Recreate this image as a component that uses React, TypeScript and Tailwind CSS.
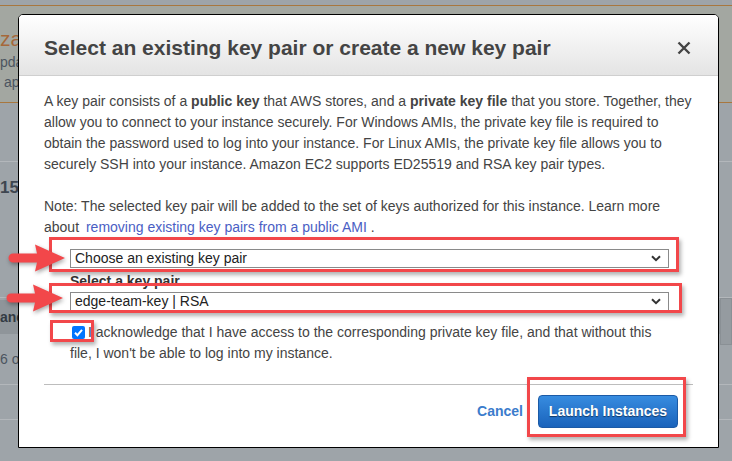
import type { ReactNode } from 'react'

function Chevron() {
  return (
    <svg width="10" height="7" viewBox="0 0 10 7" className="shrink-0">
      <path d="M1 1.2 L5 5.2 L9 1.2" fill="none" stroke="#333" strokeWidth="2" />
    </svg>
  )
}

function Seletor({ children }: { children: ReactNode }) {
  return (
    <div className="ml-[26px] w-[599px] h-[19px] border border-[#8a8a8a] bg-white flex items-center justify-between pl-[4px] pr-[7px] text-[14px] leading-[17px] text-[#222]">
      <span>{children}</span>
      <Chevron />
    </div>
  )
}

function Seta({ className }: { className: string }) {
  return (
    <svg
      className={`absolute drop-shadow-[1px_2px_2px_rgba(0,0,0,0.35)] ${className}`}
      width="58"
      height="30"
      viewBox="0 0 58 30"
    >
      <path
        d="M5 10.5 H29 L27 1.5 L57 15 L27 28.5 L29 19.5 H5 A4.5 4.5 0 0 1 5 10.5 Z"
        fill="#f2474a"
      />
    </svg>
  )
}

const caixa = 'absolute border-[3px] border-[#f2474a] shadow-[2px_3px_4px_rgba(0,0,0,0.3)]'

export default function App() {
  return (
    <div className="relative w-[732px] h-[461px] overflow-hidden bg-[#9ea4a9] font-['Liberation_Sans',Arial,sans-serif]">
      {/* fundo da página, atrás do modal */}
      <div className="h-[5px]" />
      <div className="h-[98px] border-y border-[#a8773f] bg-[#a3a7a1] pt-[20px] pl-0">
        <div className="text-[21px] leading-[26px] text-[#a6683a]">zar</div>
        <div className="text-[14px] leading-[20px] text-[#4c5560]">pda</div>
        <div className="text-[14px] leading-[20px] text-[#4c5560] pl-[4px]">ap</div>
      </div>
      <div className="h-[58px]" />
      <div className="h-[136px] border-t border-[#b3b7bb]">
        <div className="pt-[13px] text-[17px] font-bold text-[#3e4650]">15</div>
      </div>
      <div className="border-t border-[#b3b7bb] h-[3px]" />
      <div className="h-[34px] bg-[#8f959a] flex items-center text-[14px] font-bold text-[#333b44]">
        anc
      </div>
      <div className="h-[50px] flex items-center text-[14px] text-[#4c5560]">6 or</div>
      <div className="h-[35px] border-t border-[#b3b7bb]" />
      <div className="border-t border-[#b3b7bb]" />
      <div className="absolute left-[720px] top-[298px] w-[12px] h-[47px] border border-[#8a9095] bg-[#959ba0]" />

      {/* modal */}
      <div className="absolute left-[18px] top-[14px] w-[701px] h-[434px] border border-black rounded-t-[5px] bg-white flex flex-col overflow-hidden">
        <div className="h-[61px] shrink-0 border-b border-[#cfcfcf] bg-gradient-to-b from-white to-[#e4e4e4] flex items-center justify-between pl-[25px] pr-[27px] pt-[6px]">
          <h1 className="text-[21px] font-bold text-[#444]">
            Select an existing key pair or create a new key pair
          </h1>
          <svg width="14" height="14" viewBox="0 0 14 14">
            <path d="M1.5 1.5 L12.5 12.5 M12.5 1.5 L1.5 12.5" stroke="#444" strokeWidth="2.4" />
          </svg>
        </div>

        <div className="pt-[15px] px-[25px] text-[14px] leading-[21px] text-[#444] whitespace-nowrap">
          <p>
            A key pair consists of a <b>public key</b> that AWS stores, and a <b>private key file</b> that you store. Together, they
            <br />
            allow you to connect to your instance securely. For Windows AMIs, the private key file is required to
            <br />
            obtain the password used to log into your instance. For Linux AMIs, the private key file allows you to
            <br />
            securely SSH into your instance. Amazon EC2 supports ED25519 and RSA key pair types.
          </p>
          <p className="mt-[21px]">
            Note: The selected key pair will be added to the set of keys authorized for this instance. Learn more
            <br />
            about <span className="text-[#4a5ec4] ml-[3px]">removing existing key pairs from a public AMI</span> .
          </p>

          <div className="mt-[11px]">
            <Seletor>Choose an existing key pair</Seletor>
          </div>
          <div className="mt-[4px] ml-[26px] h-[18px] text-[14px] leading-[18px] font-bold text-[#333]">
            Select a key pair
          </div>
          <div className="mt-[2px]">
            <Seletor>edge-team-key | RSA</Seletor>
          </div>

          <div className="mt-[11px] ml-[26px]">
            <span className="inline-block align-[-2px] ml-[2px] mr-[3px] w-[13px] h-[13px] rounded-[2px] bg-[#0075ff]">
              <svg width="13" height="13" viewBox="0 0 13 13">
                <path d="M3 6.8 L5.4 9.2 L10 3.8" fill="none" stroke="white" strokeWidth="2" />
              </svg>
            </span>
            I acknowledge that I have access to the corresponding private key file, and that without this
            <br />
            file, I won't be able to log into my instance.
          </div>

          <div className="mt-[20px] border-t border-[#bdbdbd]" />

          <div className="mt-[10px] flex justify-end items-center gap-[15px] pr-[15px]">
            <span className="font-bold text-[#3b7ccc]">Cancel</span>
            <button className="h-[33px] w-[140px] rounded-[4px] border border-[#1b5aa6] bg-gradient-to-b from-[#378ce0] to-[#1a63bb] text-white font-bold text-[14px] [text-shadow:0_1px_1px_rgba(0,0,0,0.5)]">
              Launch Instances
            </button>
          </div>
        </div>
      </div>

      {/* anotações vermelhas */}
      <div className={`${caixa} left-[49px] top-[237px] w-[630px] h-[35px]`} />
      <div className={`${caixa} left-[49px] top-[283px] w-[633px] h-[30px]`} />
      <div className={`${caixa} left-[50px] top-[320px] w-[44px] h-[22px]`} />
      <div className={`${caixa} left-[527px] top-[377px] w-[159px] h-[60px]`} />
      <Seta className="left-[8px] top-[243px]" />
      <Seta className="left-[6px] top-[283px]" />
    </div>
  )
}
